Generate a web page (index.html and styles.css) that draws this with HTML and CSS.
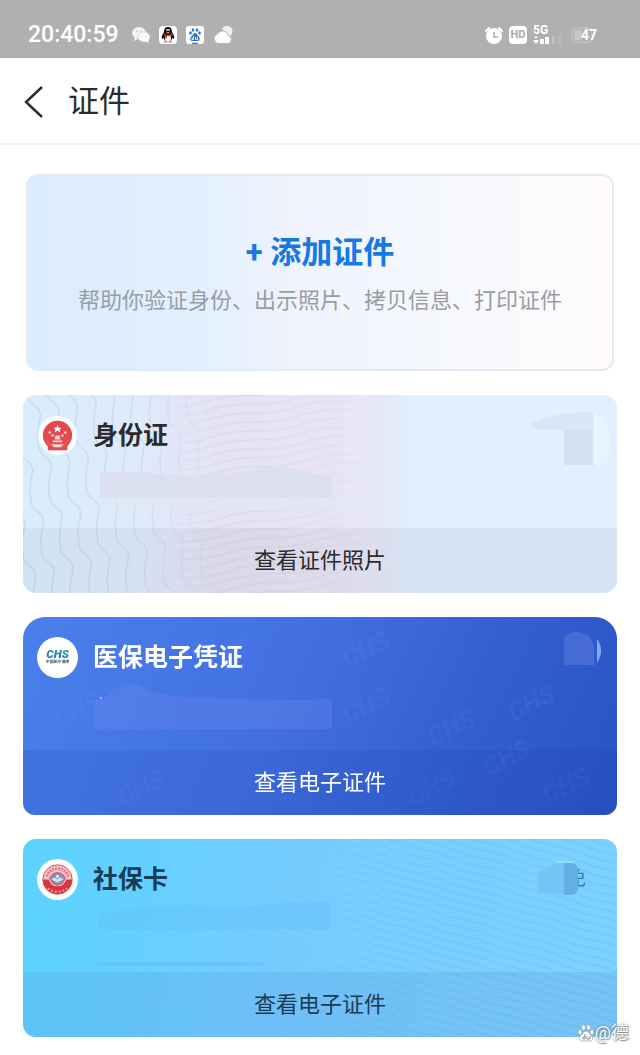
FILE: index.html
```html
<!DOCTYPE html>
<html lang="zh-CN">
<head>
    <meta charset="UTF-8">
    <meta name="viewport" content="width=device-width, initial-scale=1.0">
    <title>证件</title>
    <link rel="stylesheet" href="styles.css">
</head>
<body>
    <div class="status-bar">
        <span class="clock">20:40:59</span>
        <div class="status-apps">
            <svg width="18" height="18" viewBox="0 0 18 18">
                <ellipse cx="7" cy="7" rx="7" ry="6" fill="#f2f2f2"/>
                <path d="M3 11l-1 4 4-2z" fill="#f2f2f2"/>
                <ellipse cx="12" cy="11" rx="6" ry="5" fill="#fff" stroke="#c8c8c8" stroke-width=".6"/>
                <path d="M13 15l4 2-1-4z" fill="#fff"/>
                <g fill="#c4c4c4"><circle cx="5" cy="5" r=".8"/><circle cx="9" cy="5" r=".8"/><circle cx="10" cy="10" r=".8"/><circle cx="14" cy="10" r=".8"/></g>
            </svg>
            <svg width="18" height="18" viewBox="0 0 18 18">
                <rect width="18" height="18" rx="4" fill="#fff"/>
                <path d="M9 1C6 1 5 3 5 6c-1 2-3 4-2 7 1 0 1-1 2-1 0 2 1 4 4 4s4-2 4-4c1 0 1 1 2 1 1-3-1-5-2-7 0-3-1-5-4-5z" fill="#171216"/>
                <ellipse cx="9" cy="12.500" rx="3" ry="3.500" fill="#fff"/>
                <ellipse cx="8" cy="4" rx=".8" ry="1" fill="#fff"/>
                <ellipse cx="10" cy="4" rx=".8" ry="1" fill="#fff"/>
                <path d="M7 6h4l-2 1.500z" fill="#e9a53a"/>
                <path d="M4.500 7.500Q9 10 13.500 7.500v2Q11 10.500 8 10v2.500H6.500v-3l-2-.5z" fill="#dc2f43"/>
                <path d="M4 16.500q2-2 4.500 0zM9.500 16.500q2-2 4.500 0z" fill="#b0602c"/>
            </svg>
            <svg width="18" height="18" viewBox="0 0 18 18">
                <rect width="18" height="18" rx="3" fill="#fff"/>
                <g fill="#3a78b5">
                    <ellipse cx="4.500" cy="7" rx="1.400" ry="1.800"/>
                    <ellipse cx="7" cy="4" rx="1.300" ry="1.800"/>
                    <ellipse cx="11" cy="4" rx="1.300" ry="1.800"/>
                    <ellipse cx="13.500" cy="7" rx="1.400" ry="1.800"/>
                    <path d="M9 7c-2 0-2 2-3.500 3.200C3.500 12 4 15 6.500 15h5c2.500 0 3-3 1-4.800C11 9 11 7 9 7z"/>
                    <rect x="6" y="16.800" width="6" height="1.200"/>
                </g>
                <path d="M7.500 10v3.500H6q-1-1.500 1.500-1.700M9.500 11v2.500h2V11" fill="none" stroke="#fff" stroke-width=".8"/>
            </svg>
            <svg width="20" height="18" viewBox="0 0 20 18">
                <path d="M9 3a5.500 5.500 0 1 1 8 7" fill="#f0f0f0"/>
                <path d="M5 17.500a5 5 0 0 1-.5-9.500 6 6 0 0 1 11 1.500 4.200 4.200 0 0 1 0 8z" fill="#fff" stroke="#b0b0b0" stroke-width=".8"/>
            </svg>
        </div>
        <div class="status-signal">
            <svg width="18" height="18" viewBox="0 0 18 18">
                <circle cx="9" cy="10" r="8" fill="#fff"/>
                <path d="M1 5l3-3M17 5l-3-3" stroke="#fff" stroke-width="2" stroke-linecap="round"/>
                <path d="M9 6v5h4" fill="none" stroke="#aaa" stroke-width="1.400"/>
            </svg>
            <span class="hd">HD</span>
            <div class="network">
                <span class="net-type">5G</span>
                <svg width="28" height="8" viewBox="0 0 28 8">
                    <path d="M1 2l2-2 2 2zM0 4h6L3 8z" fill="#fff"/>
                    <rect x="7" y="3" width="4" height="5" fill="#fff"/>
                    <rect x="12" y="1" width="4" height="7" fill="#fff"/>
                    <rect x="19" y="0" width="3" height="8" fill="#bfbfbf"/>
                    <rect x="25" y="0" width="3" height="8" fill="#bababa"/>
                </svg>
            </div>
            <div class="battery">
                <svg width="24" height="16" viewBox="0 0 24 16">
                    <rect x="1" y="1" width="20" height="14" rx="4" fill="none" stroke="#c9c9c9"/>
                    <rect x="3" y="3" width="8" height="10" rx="2" fill="#c6c6c6"/>
                    <path d="M22.500 5v6" stroke="#c9c9c9"/>
                </svg>
                <span class="battery-level">47</span>
            </div>
        </div>
    </div>

    <header class="nav">
        <button class="back" aria-label="返回">
            <svg width="20" height="32" viewBox="0 0 20 32">
                <path d="M18 1L2 16l16 15" fill="none" stroke="#2b2b2b" stroke-width="2.400"/>
            </svg>
        </button>
        <h1>证件</h1>
    </header>

    <main class="content">
        <button class="add-card">
            <span class="add-title">+ 添加证件</span>
            <span class="add-hint">帮助你验证身份、出示照片、拷贝信息、打印证件</span>
        </button>

        <article class="card card-id">
            <svg class="card-art" viewBox="0 0 594 198" preserveAspectRatio="none">
                <defs>
                    <pattern id="zigzag" width="19" height="52" patternUnits="userSpaceOnUse" patternTransform="rotate(-12)">
                        <path d="M5 0q-2 7 4 13t3 13-5 13-2 13" fill="none" stroke="#a9bfd9" stroke-width=".8"/>
                    </pattern>
                    <pattern id="ripple" width="90" height="9" patternUnits="userSpaceOnUse" patternTransform="rotate(-8)">
                        <path d="M0 5Q22 1 45 5t45 0" fill="none" stroke="#c5b9dc" stroke-width=".6"/>
                    </pattern>
                    <linearGradient id="fadeLeft">
                        <stop offset="0" stop-color="#fff" stop-opacity=".8"/>
                        <stop offset=".2" stop-color="#fff" stop-opacity=".6"/>
                        <stop offset=".34" stop-color="#fff" stop-opacity="0"/>
                    </linearGradient>
                    <linearGradient id="fadeMiddle">
                        <stop offset=".2" stop-color="#fff" stop-opacity="0"/>
                        <stop offset=".34" stop-color="#fff" stop-opacity=".6"/>
                        <stop offset=".5" stop-color="#fff" stop-opacity=".4"/>
                        <stop offset=".63" stop-color="#fff" stop-opacity="0"/>
                    </linearGradient>
                    <mask id="maskLeft"><rect width="594" height="198" fill="url(#fadeLeft)"/></mask>
                    <mask id="maskMiddle"><rect width="594" height="198" fill="url(#fadeMiddle)"/></mask>
                </defs>
                <rect width="594" height="198" fill="url(#zigzag)" mask="url(#maskLeft)"/>
                <rect width="594" height="198" fill="url(#ripple)" mask="url(#maskMiddle)"/>
                <path d="M77 103h265v12H180l-103-2z" fill="#e3e7f4" opacity=".6"/>
                <path d="M77 77h40q30 4 60 3 40-1 60-7 30-3 55 6l17 2v22H77z" fill="#dadfee" opacity=".85"/>
                <path d="M507 29q20-12 63-12v53h-29V35h-20q-12 0-14-6z" fill="#d7e7f6"/>
                <path d="M541 35h29v35h-29z" fill="#d2e2f0"/>
                <path d="M571 17q16 8 16 30t-10 26l-6-4z" fill="#e6f4ff"/>
            </svg>
            <div class="card-body">
                <svg class="logo" viewBox="0 0 42 42">
                    <circle cx="21" cy="21" r="20" fill="#fff" opacity=".9"/>
                    <path d="M11 36v-4a15 15 0 1 1 20 0v4z" fill="#e5474e"/>
                    <path d="M21 10l1 3h3l-2 2 1 3-3-2-3 2 1-3-2-2h3z" fill="#fff"/>
                    <g fill="#ffd5d0">
                        <circle cx="13" cy="18" r="1.300"/><circle cx="29" cy="18" r="1.300"/>
                        <circle cx="16" cy="21" r="1.200"/><circle cx="26" cy="21" r="1.200"/>
                        <path d="M18 25l1-4h4l1 4zM16 26h10v2H16zM14 30h14l-3 3h-8z"/>
                    </g>
                    <path d="M9 25q3 6 8 7M33 25q-3 6-8 7" fill="none" stroke="#ea6965"/>
                </svg>
                <h2>身份证</h2>
            </div>
            <a class="card-link" href="#">查看证件照片</a>
        </article>

        <article class="card card-medical">
            <svg class="card-art" viewBox="0 0 594 198" preserveAspectRatio="none">
                <g class="emboss">
                    <text transform="translate(35 112) rotate(-27)">CHS</text>
                    <text transform="translate(190 55) rotate(-27)">CHS</text>
                    <text transform="translate(325 52) rotate(-27)">CHS</text>
                    <text transform="translate(325 108) rotate(-27)">CHS</text>
                    <text transform="translate(410 130) rotate(-27)">CHS</text>
                    <text transform="translate(490 105) rotate(-27)">CHS</text>
                    <text transform="translate(100 190) rotate(-27)">CHS</text>
                    <text transform="translate(390 190) rotate(-27)">CHS</text>
                    <text transform="translate(465 160) rotate(-27)">CHS</text>
                    <text transform="translate(525 188) rotate(-27)">CHS</text>
                </g>
                <path d="M72 112V84l14-6q8-11 18-11 12 0 22 7 20 5 40 6 80 4 143 2v30z" fill="#7390ee" opacity=".25"/>
                <path d="M541 48V20q8-6 15-5 12 2 15 14v19z" fill="#4e70d6" opacity=".8"/>
                <path d="M574 22q8 11 0 24z" fill="#8aa6f0"/>
                <circle cx="78" cy="81" r="1" fill="#b9c9fa"/>
            </svg>
            <div class="card-body">
                <svg class="logo" viewBox="0 0 42 42">
                    <defs>
                        <linearGradient id="chs" x1="0" y1="0" x2="0" y2="1">
                            <stop offset="0" stop-color="#2a9fb8"/>
                            <stop offset="1" stop-color="#1f6fac"/>
                        </linearGradient>
                    </defs>
                    <circle cx="21" cy="21" r="21" fill="#fff"/>
                    <text class="logo-name" x="21" y="21" text-anchor="middle">CHS</text>
                    <text class="logo-caption" x="21" y="27" text-anchor="middle">中国医疗保障</text>
                </svg>
                <h2>医保电子凭证</h2>
            </div>
            <a class="card-link" href="#">查看电子证件</a>
        </article>

        <article class="card card-social">
            <svg class="card-art" viewBox="0 0 594 198" preserveAspectRatio="none">
                <defs>
                    <pattern id="breeze" width="64" height="8" patternUnits="userSpaceOnUse" patternTransform="rotate(16)">
                        <path d="M0 4q16-2 32 0t32 0" fill="none" stroke="#52aeea" stroke-width="1"/>
                    </pattern>
                    <linearGradient id="fadeRight">
                        <stop offset=".3" stop-color="#fff" stop-opacity="0"/>
                        <stop offset=".6" stop-color="#fff" stop-opacity=".25"/>
                        <stop offset="1" stop-color="#fff" stop-opacity=".35"/>
                    </linearGradient>
                    <mask id="maskRight"><rect width="594" height="198" fill="url(#fadeRight)"/></mask>
                </defs>
                <rect width="594" height="198" fill="url(#breeze)" mask="url(#maskRight)"/>
                <path d="M76 91V75q40-7 90-9 40 6 80-1l60-3v28z" fill="#62bcf5" opacity=".35"/>
                <path d="M72 123h170v4H72z" fill="#5dbaf2" opacity=".4"/>
                <path d="M516 54V33l16-9h10v31z" fill="#76c3f6"/>
                <path d="M532 23h18" stroke="#b1e7ff"/>
            </svg>
            <div class="card-body">
                <svg class="logo" viewBox="0 0 42 42">
                    <circle cx="21" cy="21" r="21" fill="#fff"/>
                    <circle cx="21" cy="21" r="15" fill="#f6c6cc" stroke="#d84c58"/>
                    <path d="M6 21h6q2 7 9 7t9-7h6a15 15 0 0 1-30 0z" fill="#d73640"/>
                    <path d="M10 18q3-8 11-8t11 8" fill="none" stroke="#e07b86" stroke-width="3" stroke-dasharray="2 1"/>
                    <path d="M11 30q10 7 20 0" fill="none" stroke="#f1a3a5" stroke-width="2" stroke-dasharray="2 2"/>
                    <path d="M13 20q2-6 8-6t8 6l-3 5-5 2-5-2z" fill="#8592b5" stroke="#d84c58"/>
                    <path d="M15 21q3-4 6 0 3-4 6 0l-6 3z" fill="#d8deee"/>
                    <circle cx="21" cy="18" r="1.500" fill="#f1f3fa"/>
                </svg>
                <h2>社保卡</h2>
                <span class="card-tag">免</span>
            </div>
            <a class="card-link" href="#">查看电子证件</a>
        </article>
    </main>

    <div class="watermark">
        <svg width="18" height="18" viewBox="0 0 18 18">
            <g fill="#fff" stroke="#8a9aa5" stroke-width=".7">
                <ellipse cx="3" cy="8" rx="2" ry="2.600"/>
                <ellipse cx="6.500" cy="3.500" rx="2" ry="2.800"/>
                <ellipse cx="11.500" cy="3.500" rx="2" ry="2.800"/>
                <ellipse cx="15" cy="8" rx="2" ry="2.600"/>
                <path d="M9 7C6.500 7 6 9.500 4 11c-3 2.500-2 6 1.500 6h7c3.500 0 4.500-3.500 1.500-6-2-1.500-2.500-4-5-4z"/>
            </g>
            <path d="M8 10v5H6q-2-1.500 2-3M10 12v3h3v-3" fill="none" stroke="#71889a" stroke-width=".9"/>
        </svg>
        <span>@德</span>
    </div>
</body>
</html>
```

FILE: styles.css
```css
* {
    box-sizing: border-box;
}
body {
    margin: 0;
    min-height: 100vh;
    position: relative;
    background-color: #fff;
    color: #2b2b2b;
    font-family: Roboto, "Noto Sans CJK SC", sans-serif;
}
h1, h2 {
    margin: 0;
}
svg {
    display: block;
    flex-shrink: 0;
}
button {
    font-family: inherit;
    cursor: pointer;
}

/* status bar */
.status-bar {
    display: flex;
    align-items: center;
    height: 58px;
    padding: 11px 43px 0 28px;
    background-color: #b0b0b0;
    color: #fff;
}
.clock {
    font-size: 23px;
    font-weight: 500;
    line-height: 24px;
}
.status-apps {
    display: flex;
    gap: 9px;
    margin-left: 13px;
}
.status-signal {
    display: flex;
    align-items: center;
    gap: 6px;
    margin-left: auto;
}
.hd {
    width: 18px;
    border-radius: 4px;
    background-color: #fff;
    color: #a6a6a6;
    font-size: 11px;
    font-weight: bold;
    line-height: 18px;
    text-align: center;
}
.network {
    width: 32px;
}
.net-type {
    display: block;
    font-size: 12px;
    font-weight: bold;
    line-height: 11px;
}
.battery {
    position: relative;
    width: 26px;
}
.battery-level {
    position: absolute;
    top: 0;
    right: 0;
    font-size: 14px;
    font-weight: bold;
    line-height: 16px;
}

/* title bar */
.nav {
    display: flex;
    align-items: center;
    gap: 24px;
    height: 87px;
    padding: 2px 24px 0;
    border-bottom: 2px solid #f3f3f3;
}
.back {
    padding: 0;
    border: none;
    background: none;
}
.nav h1 {
    font-size: 31px;
    font-weight: 400;
    line-height: 40px;
}

.content {
    display: flex;
    flex-direction: column;
    gap: 24px;
    padding: 29px 23px 18px;
}

/* add card */
.add-card {
    display: flex;
    flex-direction: column;
    align-items: center;
    gap: 8px;
    margin: 0 3px;
    padding: 53px 16px 52px;
    border: 2px solid #dfecf6;
    border-radius: 12px;
    background: linear-gradient(90deg, #dbecfe, #e3f0fe 30%, #eff3fd 45%, #f6f8fe 72%, #fffbfb);
}
.add-title {
    color: #1677e6;
    font-size: 31px;
    font-weight: bold;
    line-height: 48px;
}
.add-hint {
    color: #999da3;
    font-size: 22px;
    line-height: 32px;
}

/* document cards */
.card {
    position: relative;
    overflow: hidden;
    border-radius: 13px;
}
.card-art {
    position: absolute;
    top: 0;
    left: 0;
    width: 100%;
    height: 100%;
}
.card-body {
    position: relative;
    display: flex;
    align-items: flex-start;
    gap: 15px;
    min-height: 133px;
    padding: 20px 14px;
}
.logo {
    width: 41px;
    height: 41px;
}
.logo-name {
    fill: url(#chs);
    font-size: 12px;
    font-style: italic;
    font-weight: 900;
}
.logo-caption {
    fill: #48606c;
    font-size: 4px;
    font-weight: bold;
}
.card h2 {
    font-size: 25px;
    font-weight: bold;
    line-height: 42px;
}
.card-link {
    position: relative;
    display: block;
    padding: 16px;
    color: inherit;
    font-size: 22px;
    line-height: 33px;
    text-align: center;
    text-decoration: none;
}
.card-id {
    background: linear-gradient(90deg, #d9edfd, #dfeafa 20%, #e5e3f4 34%, #e8e4f4 50%, #e6e8f9 60%, #e0f0fe 66%, #e0f0fe);
}
.card-id .card-link {
    background-color: rgba(60, 70, 90, 0.06);
}
.card-medical {
    border-radius: 22px 22px 12px 12px;
    background: linear-gradient(115deg, #4a80ec, #426fe0 45%, #3560d2 70%, #2953c4);
    color: #fff;
}
.card-medical .card-link {
    background-color: rgba(20, 60, 150, 0.12);
}
.emboss {
    fill: #7c9dfa;
    opacity: 0.1;
    font-size: 26px;
    font-style: italic;
    font-weight: bold;
}
.card-social {
    background: linear-gradient(100deg, #5dd3ff, #64d0ff 20%, #76ccff 45%, #7ed2ff);
    color: #183c55;
}
.card-social .card-link {
    background-color: rgba(80, 125, 200, 0.16);
}
.card-tag {
    position: relative;
    margin-left: auto;
    margin-right: 17px;
    color: #397da9;
    font-size: 20px;
    line-height: 38px;
}
/* smudge over the left part of the tag */
.card-tag::before {
    content: "";
    position: absolute;
    top: 4px;
    right: 8px;
    width: 14px;
    height: 32px;
    border-radius: 0 7px 7px 0;
    background-color: #64aee8;
}

/* lies over the last card */
.watermark {
    position: absolute;
    right: 11px;
    bottom: 10px;
    display: flex;
    align-items: center;
    color: #fff;
    font-size: 18px;
    line-height: 24px;
    text-shadow: 0 0 2px #67747d, 1px 1px 1px #8d979e;
}
```
